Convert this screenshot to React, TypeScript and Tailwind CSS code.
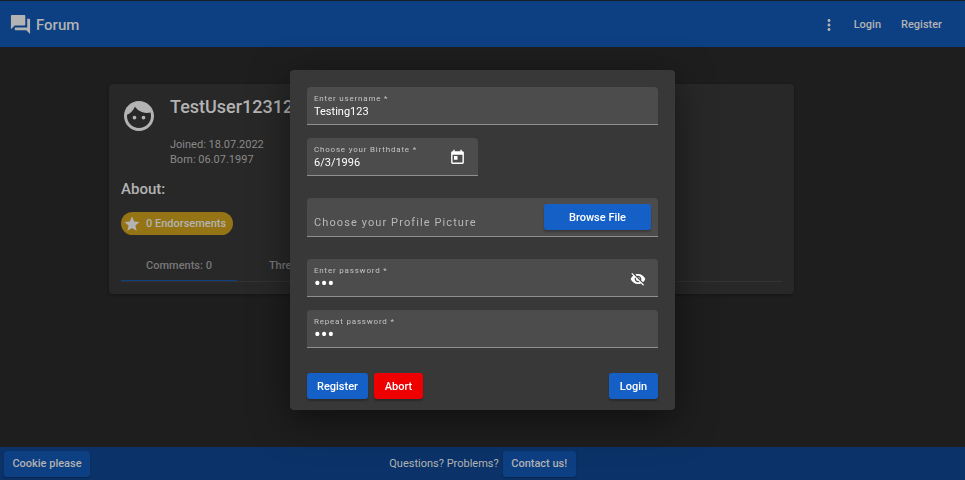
import React, { useId } from "react";
import { MdFace, MdForum, MdMoreVert, MdStar, MdToday, MdVisibilityOff } from "react-icons/md";

type FieldProps = {
  label: string;
  value: string;
  type?: "text" | "password";
  className?: string;
  children?: React.ReactNode;
};

function Field({ label, value, type = "text", className = "", children }: FieldProps) {
  const id = useId();
  const size = type === "password" ? "text-[20px]" : "text-[11px]";
  return (
    <div className={`flex h-[38px] items-center rounded-t border-b border-[#8f8f8f] bg-[#4c4c4c] px-[7px] ${className}`}>
      <div className="flex min-w-0 flex-1 flex-col pt-px">
        <label htmlFor={id} className="text-[8px] leading-[10px] tracking-widest text-[#c4c4c4]">
          {label}
        </label>
        <input
          id={id}
          type={type}
          defaultValue={value}
          className={`h-[15px] w-full bg-transparent leading-[15px] text-white outline-none ${size}`}
        />
      </div>
      {children}
    </div>
  );
}

const action =
  "h-[26px] rounded-[3px] bg-[#1560c6] pt-[2px] text-[11px] font-medium text-white shadow-[0_2px_2px_rgba(0,0,0,0.25)]";

function Header() {
  return (
    <header className="flex h-[47px] items-center border-t border-[#161f24] bg-[#0d3f83] pl-[9px] pr-[23px] text-[#b3b3b3]">
      <MdForum size={23} />
      <h1 className="ml-1 flex-1 pt-[2px] text-[15px] font-medium">Forum</h1>
      <nav className="flex items-center pt-[2px] text-[11px] font-medium">
        <button type="button" aria-label="More options" className="mr-[16px]">
          <MdMoreVert size={18} />
        </button>
        <a href="#login" className="mr-[20px]">Login</a>
        <a href="#register">Register</a>
      </nav>
    </header>
  );
}

function Profile() {
  const tab = "h-[34px] w-[116px] border-b pt-[5px]";
  return (
    <main className="flex-1 pl-[109px] pr-[171px] pt-[37px]">
      <section className="rounded bg-[#282828] px-3 pb-3 pt-[13px] text-[#b3b3b3] shadow-[0_1px_3px_rgba(0,0,0,0.3)]">
        <div className="flex">
          <MdFace size={36} className="mt-px shrink-0" />
          <div className="ml-[13px]">
            <h2 className="text-[18px] font-medium leading-[20px]">TestUser12312</h2>
            <p className="mt-5 text-[11px] leading-[15px] text-[#8a8a8a]">
              Joined: 18.07.2022
              <br />
              Born: 06.07.1997
            </p>
          </div>
        </div>
        <h3 className="mt-3 text-[15px] font-medium leading-[20px]">About:</h3>
        <div className="mt-[13px] flex h-[23px] w-fit items-center rounded-full bg-[#957415] pl-[2px] pr-[7px] text-[11px] font-medium">
          <MdStar size={18} />
          <span className="ml-[5px] pt-px">0 Endorsements</span>
        </div>
        <div role="tablist" className="mt-3 flex border-b border-[#333333] text-[11px] font-medium text-[#787878]">
          <button type="button" role="tab" aria-selected="true" className={`${tab} border-[#0d3f83]`}>
            Comments: 0
          </button>
          <button type="button" role="tab" aria-selected="false" className={`${tab} border-transparent`}>
            Threads: 0
          </button>
        </div>
      </section>
    </main>
  );
}

function RegisterDialog() {
  return (
    <div className="fixed inset-0 flex items-center justify-center">
      <form
        role="dialog"
        aria-label="Register"
        className="w-[385px] rounded bg-[#383838] px-[17px] pb-[11px] pt-[17px] shadow-[0_10px_38px_rgba(0,0,0,0.5)]"
      >
        <Field label="Enter username *" value="Testing123" />
        <Field label="Choose your Birthdate *" value="6/3/1996" className="mt-[13px] w-[171px]">
          <button type="button" aria-label="Open calendar" className="mr-[5px] pt-px text-white">
            <MdToday size={17} />
          </button>
        </Field>
        <div className="mt-[22px] flex h-[39px] items-center rounded-t border-b border-[#8f8f8f] bg-[#4c4c4c] px-[7px]">
          <span className="flex-1 pt-[12px] text-[11px] tracking-widest text-[#b8b8b8]">Choose your Profile Picture</span>
          <button type="button" className={`${action} w-[107px]`}>Browse File</button>
        </div>
        <Field label="Enter password *" value="abc" type="password" className="mt-[22px]">
          <button type="button" aria-label="Show password" className="mr-[5px] pt-[3px] text-white">
            <MdVisibilityOff size={16} />
          </button>
        </Field>
        <Field label="Repeat password *" value="abc" type="password" className="mt-[13px]" />
        <div className="mt-[25px] flex">
          <button type="button" className={`${action} w-[61px]`}>Register</button>
          <button type="button" className="ml-[6px] h-[26px] w-[49px] rounded-[3px] bg-[#ee0000] pt-[2px] text-[11px] font-medium text-white shadow-[0_2px_2px_rgba(0,0,0,0.25)]">
            Abort
          </button>
          <button type="button" className={`${action} ml-auto w-[49px]`}>Login</button>
        </div>
      </form>
    </div>
  );
}

function Footer() {
  const button =
    "h-[26px] rounded-[3px] bg-[#0d3f83] pt-[2px] text-[11px] font-medium shadow-[0_1px_2px_rgba(0,0,0,0.3)]";
  return (
    <footer className="grid h-[33px] grid-cols-[1fr_auto_1fr] items-center bg-[#0b3369] px-1 text-[11px] text-[#b3b3b3]">
      <div>
        <button type="button" className={`${button} w-[86px]`}>Cookie please</button>
      </div>
      <div className="flex items-center">
        <span className="pt-[2px]">Questions? Problems?</span>
        <button type="button" className={`${button} ml-1 w-[73px]`}>Contact us!</button>
      </div>
    </footer>
  );
}

export default function App() {
  return (
    <div className="flex min-h-screen flex-col bg-[#1e1e1e] font-['Roboto',sans-serif]">
      <Header />
      <Profile />
      <Footer />
      <RegisterDialog />
    </div>
  );
}
